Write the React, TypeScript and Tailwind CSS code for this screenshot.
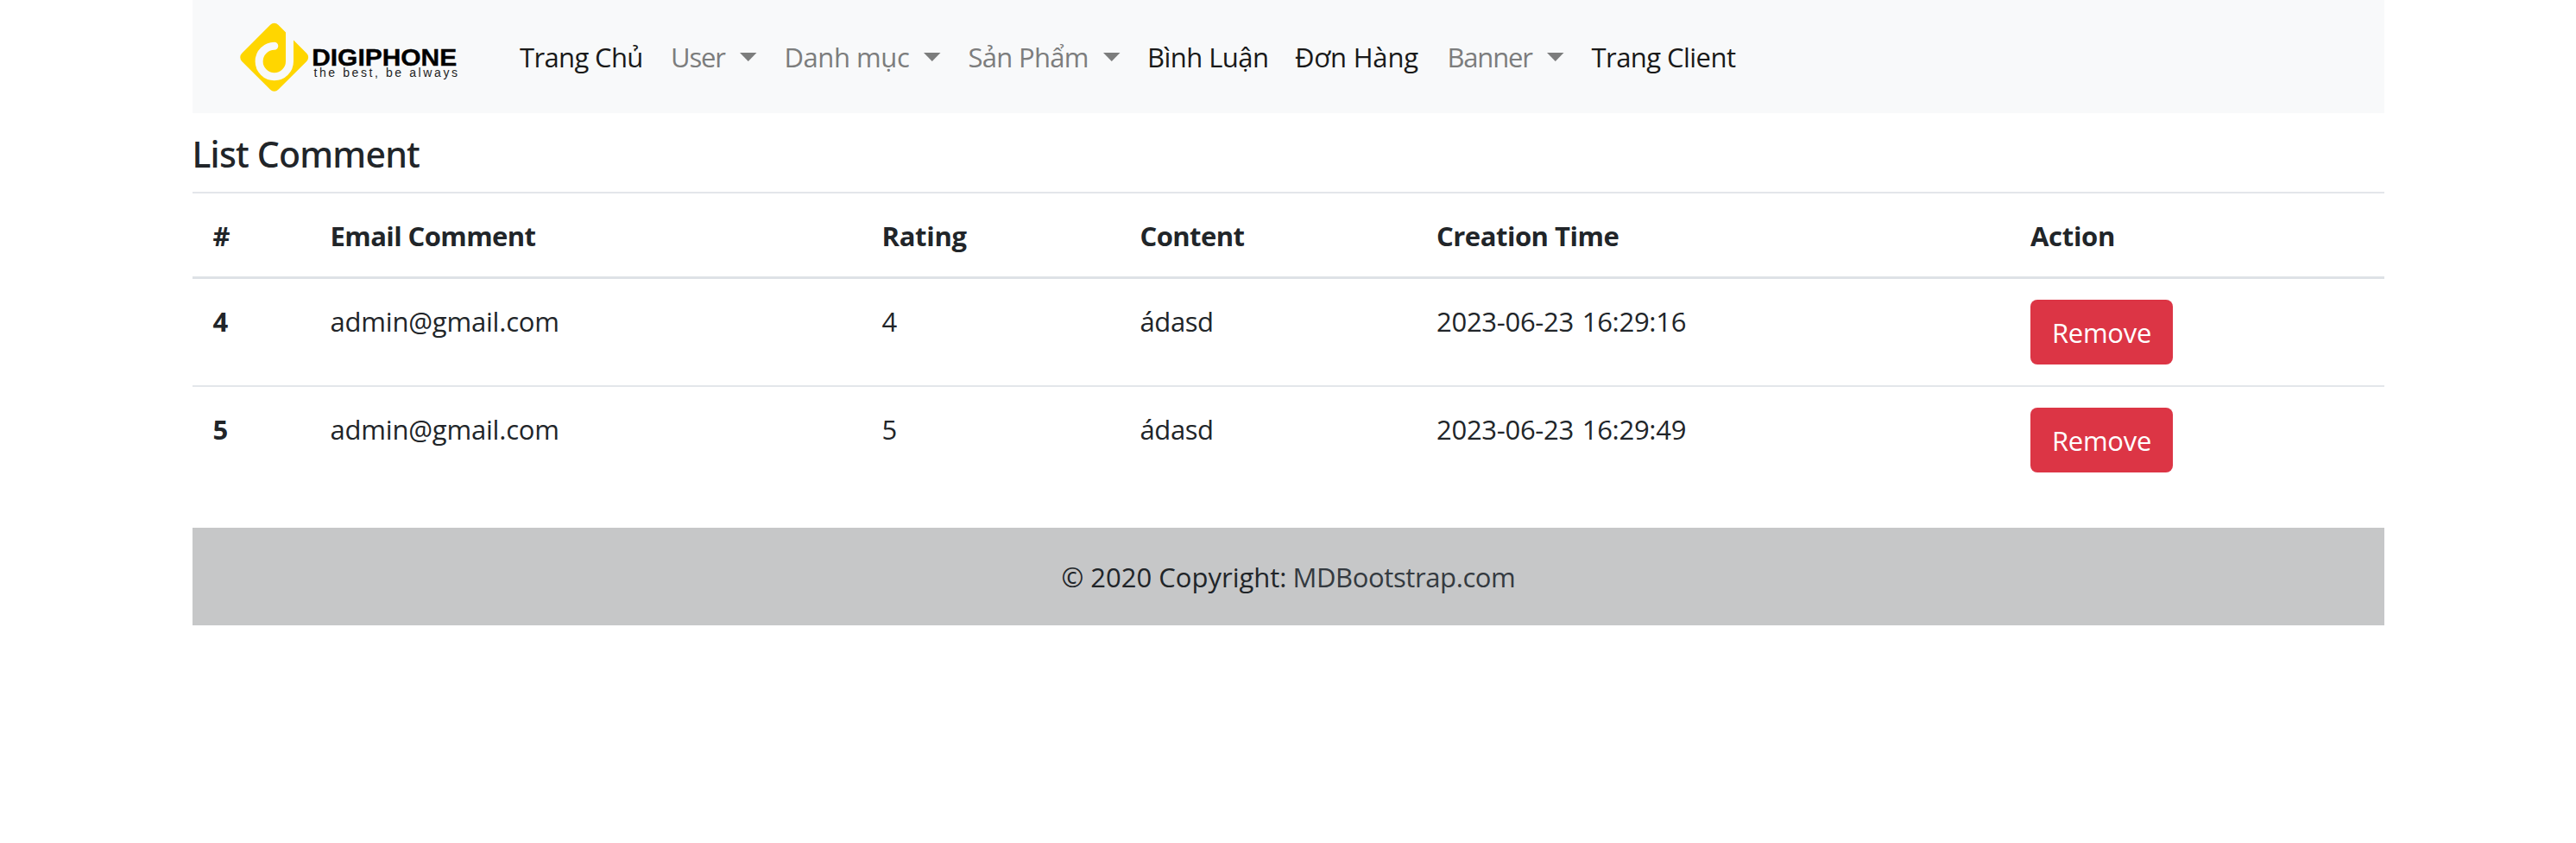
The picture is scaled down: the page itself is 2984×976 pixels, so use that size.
type NavItem = {
  label: string;
  item: string;
  text: string;
  dropdown?: boolean;
};

const navItems: NavItem[] = [
  { label: "Trang Chủ", item: "w-[175px]", text: "tracking-[-0.63px]" },
  { label: "User", item: "w-[131.5px]", text: "w-[80px] tracking-[-1.2px]", dropdown: true },
  { label: "Danh mục", item: "w-[213px]", text: "w-[161.5px] tracking-[-0.44px]", dropdown: true },
  { label: "Sản Phẩm", item: "w-[207.5px]", text: "w-[156.5px] tracking-[-0.7px]", dropdown: true },
  { label: "Bình Luận", item: "w-[171px]", text: "tracking-[-0.54px]" },
  { label: "Đơn Hàng", item: "w-[176.5px]", text: "tracking-[-0.2px]" },
  { label: "Banner", item: "w-[167px]", text: "w-[115.5px] tracking-[-1.2px]", dropdown: true },
  { label: "Trang Client", item: "w-[180px]", text: "tracking-[-0.55px]" },
];

const columns = [
  { label: "#", className: "w-[136px]" },
  { label: "Email Comment", className: "w-[639px] tracking-[-0.58px]" },
  { label: "Rating", className: "w-[299px] tracking-[-0.3px]" },
  { label: "Content", className: "w-[343.5px] tracking-[-0.58px]" },
  { label: "Creation Time", className: "w-[688px] tracking-[-0.48px]" },
  { label: "Action", className: "w-[433.5px] tracking-[-0.3px]" },
];

const comments = [
  { id: 4, email: "admin@gmail.com", rating: 4, content: "ádasd", created: "2023-06-23 16:29:16" },
  { id: 5, email: "admin@gmail.com", rating: 5, content: "ádasd", created: "2023-06-23 16:29:49" },
];

function Logo() {
  return (
    <svg className="h-[90px] w-[262px] shrink-0" viewBox="272 20 262 90" role="img" aria-label="Digiphone">
      <rect x="287.9" y="35.5" width="59.6" height="59.6" rx="6.5" fill="#ffd600" transform="rotate(45 317.7 65.3)" />
      <path
        d="M317.8 52.3 A17.7 17.7 0 1 0 335.5 70 V24"
        fill="none"
        stroke="#f8f9fa"
        strokeWidth="9"
        strokeLinecap="round"
      />
      <text
        x="361.2"
        y="75.2"
        fontFamily="Liberation Sans, Arial, sans-serif"
        fontSize="28.5"
        fontWeight="700"
        fill="#000"
        stroke="#000"
        strokeWidth="0.4"
        textLength="168"
        lengthAdjust="spacingAndGlyphs"
      >
        DIGIPHONE
      </text>
      <text
        x="363.5"
        y="88.4"
        fontFamily="Liberation Sans, Arial, sans-serif"
        fontSize="14"
        fill="#222"
        textLength="166.5"
        lengthAdjust="spacing"
      >
        the best, be always
      </text>
    </svg>
  );
}

function Caret() {
  return (
    <svg className="h-[10px] w-[19.5px] shrink-0" viewBox="0 0 19.5 10" aria-hidden="true">
      <path d="M0 0H19.5L9.75 10Z" fill="#7c7d7d" />
    </svg>
  );
}

function Navbar() {
  return (
    <nav className="flex h-[131px] items-center bg-[#f8f9fa] pl-[49.5px]">
      <Logo />
      <ul className="ml-[68px] flex items-center">
        {navItems.map(({ label, item, text, dropdown }) => (
          <li key={label} className={`${item} flex shrink-0 items-center whitespace-nowrap`}>
            <a href="#" className={`${text} block pt-0.5 ${dropdown ? "text-[#7c7d7d]" : "text-[#191919]"}`}>
              {label}
            </a>
            {dropdown && <Caret />}
          </li>
        ))}
      </ul>
    </nav>
  );
}

function CommentTable() {
  return (
    <table className="w-full table-fixed border-separate border-spacing-0 text-left">
      <thead>
        <tr>
          {columns.map(({ label, className }) => (
            <th
              key={label}
              className={`${className} border-t-2 border-b-3 border-t-[#e3e6ea] border-b-[#dee2e6] px-6 pt-[26px] pb-[23px] font-bold`}
            >
              {label}
            </th>
          ))}
        </tr>
      </thead>
      <tbody className="[&_tr+tr>*]:border-t-2 [&_tr+tr>*]:border-[#e3e6ea]">
        {comments.map((c) => (
          <tr key={c.id} className="align-top">
            <th className="px-6 pt-[26px] font-bold">{c.id}</th>
            <td className="px-6 pt-[26px] tracking-[-0.2px]">{c.email}</td>
            <td className="px-6 pt-[26px]">{c.rating}</td>
            <td className="px-6 pt-[26px] tracking-[-0.4px]">{c.content}</td>
            <td className="px-6 pt-[26px] tracking-[-0.28px] [word-spacing:2px]">{c.created}</td>
            <td className="p-6 pl-[23.5px]">
              <button className="flex h-[75px] w-[165px] items-center justify-center rounded-lg bg-[#dc3545] pt-0.5 pl-px tracking-[-0.28px] text-white">
                Remove
              </button>
            </td>
          </tr>
        ))}
      </tbody>
    </table>
  );
}

export default function App() {
  return (
    <div className="min-h-screen bg-white pl-[222.5px] font-['Open_Sans','Noto_Sans',sans-serif] text-[31px] leading-[47px] text-[#212529]">
      <div className="w-[2539px]">
        <Navbar />
        <h4 className="mt-6 mb-5 font-['Noto_Sans','Open_Sans',sans-serif] text-[41px] leading-[47px] font-medium tracking-[-0.79px]">
          List Comment
        </h4>
        <CommentTable />
        <footer className="mt-10 flex h-[112.5px] items-center bg-[#c6c7c8] pt-0.5 pl-[1007px] whitespace-nowrap">
          <span className="w-[268px] shrink-0">© 2020 Copyright:</span>
          <a href="#" className="tracking-[-0.39px] text-[#343a40]">
            MDBootstrap.com
          </a>
        </footer>
      </div>
    </div>
  );
}
